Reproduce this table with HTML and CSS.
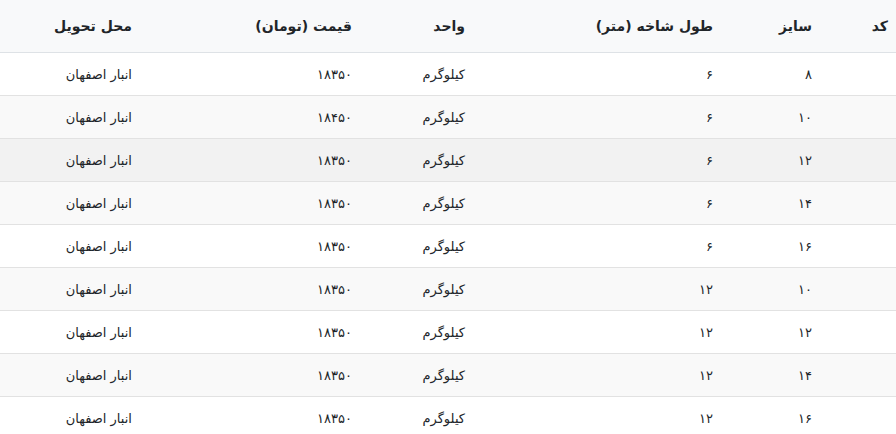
FILE: index.html
```html
<!DOCTYPE html>
<html lang="fa" dir="rtl">
<head>
<meta charset="utf-8">
<title>جدول قیمت</title>
<link rel="stylesheet" href="styles.css">
</head>
<body>
<table class="price-table">
  <colgroup>
    <col class="c-code"><col class="c-size"><col class="c-len"><col class="c-unit"><col class="c-price"><col class="c-place">
  </colgroup>
  <thead>
    <tr><th>کد</th><th>سایز</th><th>طول شاخه (متر)</th><th>واحد</th><th>قیمت (تومان)</th><th>محل تحویل</th></tr>
  </thead>
  <tbody>
    <tr><td></td><td>۸</td><td>۶</td><td>کیلوگرم</td><td>۱۸۳۵۰</td><td>انبار اصفهان</td></tr>
    <tr><td></td><td>۱۰</td><td>۶</td><td>کیلوگرم</td><td>۱۸۴۵۰</td><td>انبار اصفهان</td></tr>
    <tr class="hover"><td></td><td>۱۲</td><td>۶</td><td>کیلوگرم</td><td>۱۸۳۵۰</td><td>انبار اصفهان</td></tr>
    <tr><td></td><td>۱۴</td><td>۶</td><td>کیلوگرم</td><td>۱۸۳۵۰</td><td>انبار اصفهان</td></tr>
    <tr><td></td><td>۱۶</td><td>۶</td><td>کیلوگرم</td><td>۱۸۳۵۰</td><td>انبار اصفهان</td></tr>
    <tr><td></td><td>۱۰</td><td>۱۲</td><td>کیلوگرم</td><td>۱۸۳۵۰</td><td>انبار اصفهان</td></tr>
    <tr><td></td><td>۱۲</td><td>۱۲</td><td>کیلوگرم</td><td>۱۸۳۵۰</td><td>انبار اصفهان</td></tr>
    <tr><td></td><td>۱۴</td><td>۱۲</td><td>کیلوگرم</td><td>۱۸۳۵۰</td><td>انبار اصفهان</td></tr>
    <tr><td></td><td>۱۶</td><td>۱۲</td><td>کیلوگرم</td><td>۱۸۳۵۰</td><td>انبار اصفهان</td></tr>
  </tbody>
</table>
</body>
</html>
```
FILE: styles.css
```css
html, body {
  margin: 0;
  padding: 0;
  background: #ffffff;
}
body {
  font-family: "DejaVu Sans", "Noto Sans", sans-serif;
  color: #212529;
  direction: rtl;
}
.price-table {
  width: 896px;
  border-collapse: collapse;
  table-layout: fixed;
}
.c-code { width: 76px; }
.c-size { width: 99px; }
.c-len { width: 248px; }
.c-unit { width: 113px; }
.c-price { width: 220px; }
.c-place { width: 140px; }
.price-table th,
.price-table td {
  text-align: right;
  padding: 0 8px;
  white-space: nowrap;
}
.price-table thead th {
  background: #f8f9fa;
  height: 52px;
  font-size: 14px;
  font-weight: bold;
  border-bottom: 1px solid #dee2e6;
}
.price-table tbody td {
  height: 42px;
  font-size: 13px;
  border-bottom: 1px solid #e2e2e2;
}
.price-table tbody tr:nth-child(even) td {
  background: #f9f9f9;
}
.price-table tbody tr.hover td {
  background: #f2f2f2;
}
```
